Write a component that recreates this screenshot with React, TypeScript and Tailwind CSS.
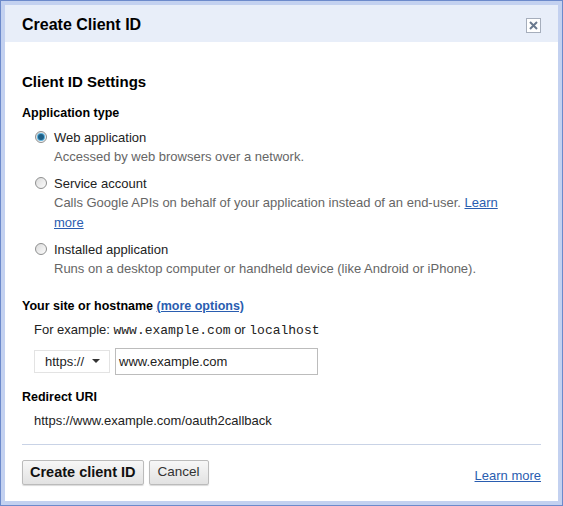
import React from 'react';

const Radio: React.FC<{ checked?: boolean }> = ({ checked }) => (
  <span className="mt-[3px] flex h-[12px] w-[12px] shrink-0 items-center justify-center rounded-full border border-[#8e8f8f] bg-gradient-to-br from-[#dcdcdc] to-[#fbfbfb]">
    {checked && <span className="h-[6px] w-[6px] rounded-full bg-[#1f5f86] ring-1 ring-[#5ab0dc]" />}
  </span>
);

const Option: React.FC<{ label: string; checked?: boolean; children: React.ReactNode }> = ({ label, checked, children }) => (
  <div className="flex gap-[7px] pl-[13px]">
    <Radio checked={checked} />
    <div className="max-w-[450px]">
      <div className="leading-[19px] text-[#222]">{label}</div>
      <div className="leading-[20px] text-[#666]">{children}</div>
    </div>
  </div>
);

export default function App() {
  return (
    <div className="h-[506px] w-[563px] border border-[#6c8acb] bg-[#c3d1f0] p-[4px] font-['Liberation_Sans',Arial,sans-serif] text-[13px] text-[#222]">
      <div className="flex h-full flex-col bg-white">
        <div className="flex h-[37px] items-center justify-between bg-[#e8eef9] pl-[17px] pr-[17px] pt-[3px]">
          <h1 className="text-[16px] font-bold text-black">Create Client ID</h1>
          <span className="flex h-[15px] w-[15px] items-center justify-center border border-[#a6aebc] bg-white">
            <svg width="9" height="9" viewBox="0 0 9 9">
              <path d="M1 1L8 8M8 1L1 8" stroke="#6b7a8f" strokeWidth="2" />
            </svg>
          </span>
        </div>

        <div className="flex flex-1 flex-col px-[17px]">
          <h2 className="mt-[30px] text-[15px] font-bold leading-[20px] text-black">Client ID Settings</h2>
          <h3 className="mt-[12px] text-[12.5px] font-bold leading-[19px] text-black">Application type</h3>
          <div className="mt-[5px] flex flex-col gap-[7px]">
            <Option label="Web application" checked>
              Accessed by web browsers over a network.
            </Option>
            <Option label="Service account">
              Calls Google APIs on behalf of your application instead of an end-user.{' '}
              <a className="text-[#2a5db0] underline" href="#">Learn more</a>
            </Option>
            <Option label="Installed application">
              Runs on a desktop computer or handheld device (like Android or iPhone).
            </Option>
          </div>

          <h3 className="mt-[18px] text-[12.5px] font-bold leading-[19px] text-black">
            Your site or hostname{' '}
            <a className="text-[#2a5db0] underline" href="#">(more options)</a>
          </h3>
          <div className="mt-[4px] pl-[12px] leading-[19px]">
            For example: <span className="font-['Liberation_Mono',monospace]">www.example.com</span> or{' '}
            <span className="font-['Liberation_Mono',monospace]">localhost</span>
          </div>
          <div className="mt-[8px] flex items-center gap-[5px] pl-[12px]">
            <div className="flex h-[23px] w-[76px] items-center gap-[8px] border border-[#e3e3e3] pl-[10px]">
              <span>https://</span>
              <svg width="8" height="5" viewBox="0 0 8 5">
                <path d="M0 0H8L4 4Z" fill="#333" />
              </svg>
            </div>
            <div className="flex h-[27px] w-[203px] items-center border border-[#bcbcbc] pl-[3px]">
              www.example.com
            </div>
          </div>

          <h3 className="mt-[13px] text-[12.5px] font-bold leading-[19px] text-black">Redirect URI</h3>
          <div className="mt-[4px] pl-[12px] leading-[19px]">https://www.example.com/oauth2callback</div>

          <div className="mt-[14px] border-t border-[#c9d3e6]" />

          <div className="mt-[15px] flex items-end justify-between">
            <div className="flex gap-[5px]">
              <button className="h-[25px] rounded-[2px] border border-[#bbb] bg-gradient-to-b from-[#f7f7f7] to-[#e2e2e2] px-[7px] text-[14.5px] font-bold text-[#111] shadow-[0_1px_1px_rgba(0,0,0,0.15)]">
                Create client ID
              </button>
              <button className="h-[25px] rounded-[2px] border border-[#bbb] bg-gradient-to-b from-[#f7f7f7] to-[#e2e2e2] px-[8px] text-[13.5px] text-[#333] shadow-[0_1px_1px_rgba(0,0,0,0.15)]">
                Cancel
              </button>
            </div>
            <a className="text-[#2a5db0] underline" href="#">Learn more</a>
          </div>
        </div>
      </div>
    </div>
  );
}
